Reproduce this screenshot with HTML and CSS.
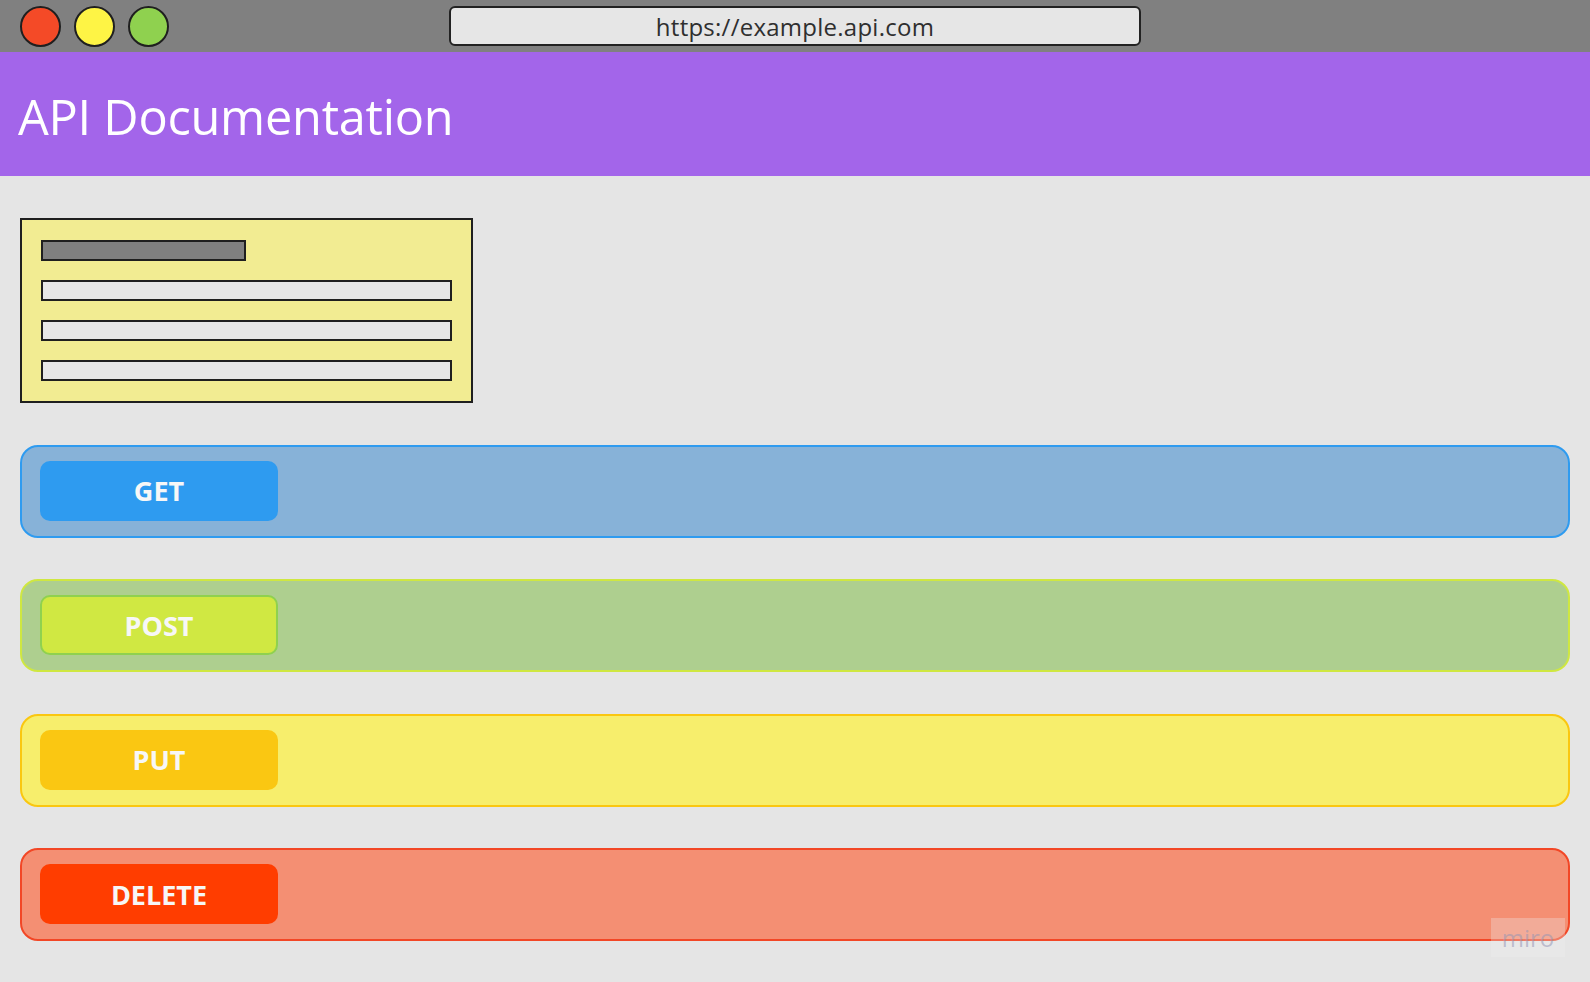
FILE: index.html
```html
<!DOCTYPE html>
<html lang="en">
<head>
<meta charset="utf-8">
<title>API Documentation</title>
<link rel="stylesheet" href="styles.css">
</head>
<body>
<div class="browser-bar">
  <div class="dots">
    <span class="dot dot-red"></span>
    <span class="dot dot-yellow"></span>
    <span class="dot dot-green"></span>
  </div>
  <div class="url">https://example.api.com</div>
  <div></div>
</div>
<header class="header">
  <h1 class="title">API Documentation</h1>
</header>
<main class="main">
  <div class="card">
    <div class="bar bar-head"></div>
    <div class="bar"></div>
    <div class="bar"></div>
    <div class="bar"></div>
  </div>
  <div class="row row-get"><span class="method">GET</span></div>
  <div class="row row-post"><span class="method">POST</span></div>
  <div class="row row-put"><span class="method">PUT</span></div>
  <div class="row row-delete"><span class="method">DELETE</span></div>
</main>
<div class="watermark">miro</div>
</body>
</html>
```

FILE: styles.css
```css
html, body {
  margin: 0;
  padding: 0;
}
body {
  width: 1590px;
  height: 982px;
  background: #e5e5e5;
  font-family: "Open Sans", "Noto Sans", sans-serif;
  overflow: hidden;
  position: relative;
}
.browser-bar {
  height: 52px;
  background: #808080;
  display: grid;
  grid-template-columns: 1fr 692px 1fr;
  align-items: start;
  box-sizing: border-box;
  padding-top: 6px;
}
.dots {
  display: flex;
  gap: 13px;
  padding-left: 20px;
}
.dot {
  width: 41px;
  height: 41px;
  box-sizing: border-box;
  border: 2px solid #1f1f1f;
  border-radius: 50%;
}
.dot-red { background: #f44a27; }
.dot-yellow { background: #fef445; }
.dot-green { background: #8fd14f; }
.url {
  height: 40px;
  box-sizing: border-box;
  border: 2px solid #222;
  border-radius: 6px;
  background: #e6e6e6;
  color: #2f2f2f;
  font-size: 24px;
  letter-spacing: 0.25px;
  display: flex;
  align-items: center;
  justify-content: center;
  line-height: 1;
  padding-top: 1px;
}
.header {
  height: 124px;
  background: #a365ea;
  display: flex;
  align-items: center;
  padding-left: 18px;
}
.title {
  margin: 0;
  color: #ffffff;
  font-weight: 400;
  font-size: 48.7px;
  letter-spacing: -0.25px;
  padding-top: 4px;
}
.main {
  padding: 42px 20px 0 20px;
  display: flex;
  flex-direction: column;
  gap: 41.5px;
}
.card {
  width: 453px;
  box-sizing: border-box;
  border: 2px solid #1f1f1f;
  background: #f2ec92;
  padding: 20px 19px 20px 19px;
  display: flex;
  flex-direction: column;
  gap: 19px;
}
.bar {
  height: 21px;
  box-sizing: border-box;
  border: 2px solid #1f1f1f;
  background: #e6e6e6;
}
.bar-head {
  width: 205px;
  background: #808080;
}
.row {
  height: 93px;
  box-sizing: border-box;
  border: 2px solid;
  border-radius: 18px;
  display: flex;
  align-items: center;
  padding-left: 18px;
}
.method {
  width: 238px;
  height: 60px;
  box-sizing: border-box;
  border-radius: 10px;
  display: flex;
  align-items: center;
  justify-content: center;
  color: #f7f7f7;
  font-weight: 700;
  font-size: 27px;
  line-height: 1;
  margin-top: -1px;
}
.row-get { background: #87b2d8; border-color: #2e9bf0; }
.row-get .method { background: #2e9bf0; }
.row-post { background: #aecf8f; border-color: #cfe741; }
.row-post .method { background: #d0e842; border: 2px solid #8fd14f; }
.row-put { background: #f7ee6c; border-color: #fac710; }
.row-put .method { background: #fac712; }
.row-delete { background: #f48f73; border-color: #f24726; }
.row-delete .method { background: #ff3d00; }
.watermark {
  position: absolute;
  left: 1491px;
  top: 918px;
  width: 74px;
  height: 39px;
  background: rgba(240, 240, 240, 0.3);
  color: rgba(150, 150, 180, 0.55);
  font-size: 24px;
  display: flex;
  align-items: center;
  justify-content: center;
  line-height: 1;
}
```
